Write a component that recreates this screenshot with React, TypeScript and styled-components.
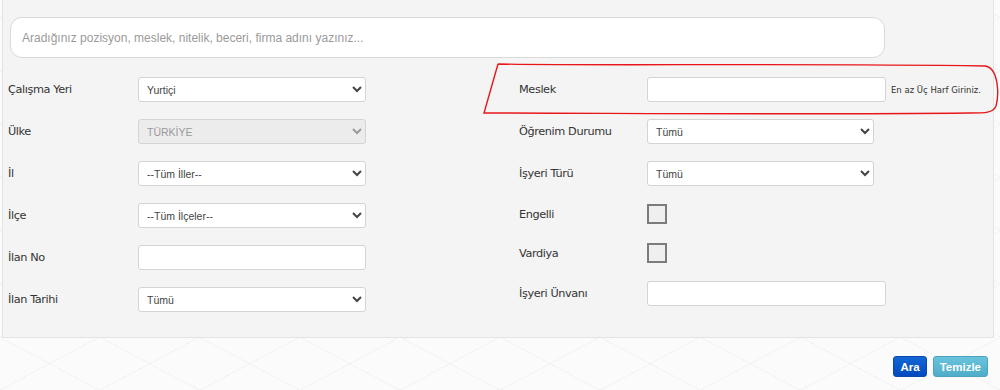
import styled, { createGlobalStyle } from "styled-components";

const GlobalStyle = createGlobalStyle`
  html, body {
    margin: 0;
    padding: 0;
    background-color: #fbfbfb;
  }
  body {
    font-family: "DejaVu Sans", Verdana, sans-serif;
    width: 1000px;
    height: 390px;
    overflow: hidden;
    background-image:
      repeating-linear-gradient(28deg, transparent 0 46px, rgba(0,0,0,0.03) 46px 47px),
      repeating-linear-gradient(-28deg, transparent 0 46px, rgba(0,0,0,0.03) 46px 47px);
  }
`;

const Page = styled.div`
  position: relative;
  width: 1000px;
  height: 390px;
`;

const Panel = styled.div`
  margin-left: 2px;
  width: 992px;
  height: 338px;
  box-sizing: border-box;
  background: #f4f4f4;
  border: 1px solid #e3e3e3;
  border-top: none;
  padding: 17px 0 0 5px;
`;

const Search = styled.input`
  display: block;
  margin-left: 2px;
  width: 875px;
  height: 41px;
  box-sizing: border-box;
  border: 1px solid #d9d9d9;
  border-radius: 12px;
  background: #fff;
  padding: 0 11px;
  font-family: "Liberation Sans", Arial, sans-serif;
  font-size: 12px;
  outline: none;
  &::placeholder {
    color: #9a9a9a;
  }
`;

const Columns = styled.div`
  display: grid;
  grid-template-columns: 511px 1fr;
  margin-top: 19px;
`;

const Column = styled.div`
  display: flex;
  flex-direction: column;
  gap: 17px;
`;

const Row = styled.div<{ $label: number; $h?: number }>`
  display: grid;
  grid-template-columns: ${(p) => p.$label}px auto 1fr;
  align-items: center;
  height: ${(p) => p.$h ?? 25}px;
`;

const Label = styled.label`
  font-size: 11.3px;
  letter-spacing: -0.4px;
  color: #333;
`;

const Select = styled.select<{ $w: number }>`
  width: ${(p) => p.$w}px;
  height: 25px;
  box-sizing: border-box;
  border: 1px solid #d4d4d4;
  border-radius: 3px;
  background: #fff;
  color: #444;
  padding: 0 4px;
  font-family: "Liberation Sans", Arial, sans-serif;
  font-size: 10.5px;
  &:disabled {
    background: #ececec;
    color: #9a9a9a;
    opacity: 1;
  }
`;

const TextInput = styled.input<{ $w: number }>`
  width: ${(p) => p.$w}px;
  height: 25px;
  box-sizing: border-box;
  border: 1px solid #d4d4d4;
  border-radius: 3px;
  background: #fff;
  padding: 0 6px;
`;

const Check = styled.input`
  appearance: none;
  margin: 0;
  width: 20px;
  height: 20px;
  box-sizing: border-box;
  border: 2px solid #7c7c7c;
  background: #efefef;
`;

const Hint = styled.span`
  font-size: 8.5px;
  color: #333;
  margin-left: 5px;
`;

const Actions = styled.div`
  display: flex;
  justify-content: flex-end;
  gap: 6px;
  padding: 18px 12px 0 0;
`;

const Button = styled.button<{ $tone: "primary" | "info" }>`
  height: 21px;
  padding: 0 6px;
  border: 1px solid ${(p) => (p.$tone === "primary" ? "#0a47a8" : "#4aa3bf")};
  border-radius: 3px;
  color: #fff;
  font-family: "Liberation Sans", Arial, sans-serif;
  font-weight: bold;
  font-size: 11.5px;
  background: ${(p) =>
    p.$tone === "primary"
      ? "linear-gradient(#1466d6, #0049c0)"
      : "linear-gradient(#69c3dc, #4fadc9)"};
`;

const Annotation = styled.svg`
  position: absolute;
  left: 0;
  top: 0;
  pointer-events: none;
`;

export default function App() {
  return (
    <Page>
      <GlobalStyle />
      <Panel>
        <Search placeholder="Aradığınız pozisyon, meslek, nitelik, beceri, firma adını yazınız..." />
        <Columns>
          <Column>
            <Row $label={130}>
              <Label>Çalışma Yeri</Label>
              <Select $w={228} defaultValue="Yurtiçi">
                <option>Yurtiçi</option>
              </Select>
            </Row>
            <Row $label={130}>
              <Label>Ülke</Label>
              <Select $w={228} disabled defaultValue="TÜRKİYE">
                <option>TÜRKİYE</option>
              </Select>
            </Row>
            <Row $label={130}>
              <Label>İl</Label>
              <Select $w={228}>
                <option>--Tüm İller--</option>
              </Select>
            </Row>
            <Row $label={130}>
              <Label>İlçe</Label>
              <Select $w={228}>
                <option>--Tüm İlçeler--</option>
              </Select>
            </Row>
            <Row $label={130}>
              <Label>İlan No</Label>
              <TextInput $w={228} />
            </Row>
            <Row $label={130}>
              <Label>İlan Tarihi</Label>
              <Select $w={228}>
                <option>Tümü</option>
              </Select>
            </Row>
          </Column>
          <Column>
            <Row $label={128}>
              <Label>Meslek</Label>
              <TextInput $w={239} />
              <Hint>En az Üç Harf Giriniz.</Hint>
            </Row>
            <Row $label={128}>
              <Label>Öğrenim Durumu</Label>
              <Select $w={227}>
                <option>Tümü</option>
              </Select>
            </Row>
            <Row $label={128}>
              <Label>İşyeri Türü</Label>
              <Select $w={227}>
                <option>Tümü</option>
              </Select>
            </Row>
            <Row $label={128} $h={22}>
              <Label>Engelli</Label>
              <Check type="checkbox" />
            </Row>
            <Row $label={128} $h={22}>
              <Label>Vardiya</Label>
              <Check type="checkbox" />
            </Row>
            <Row $label={128}>
              <Label>İşyeri Ünvanı</Label>
              <TextInput $w={239} />
            </Row>
          </Column>
        </Columns>
      </Panel>
      <Actions>
        <Button $tone="primary">Ara</Button>
        <Button $tone="info">Temizle</Button>
      </Actions>
      <Annotation width="1000" height="390" viewBox="0 0 1000 390">
        <path
          d="M498 64 C 600 66, 800 63, 985 66 C 999 68, 999 95, 996 106 C 993 113, 985 113, 970 113 C 800 115, 600 113, 484 113 L 498 64"
          fill="none"
          stroke="#e8161b"
          strokeWidth="1.4"
        />
      </Annotation>
    </Page>
  );
}
